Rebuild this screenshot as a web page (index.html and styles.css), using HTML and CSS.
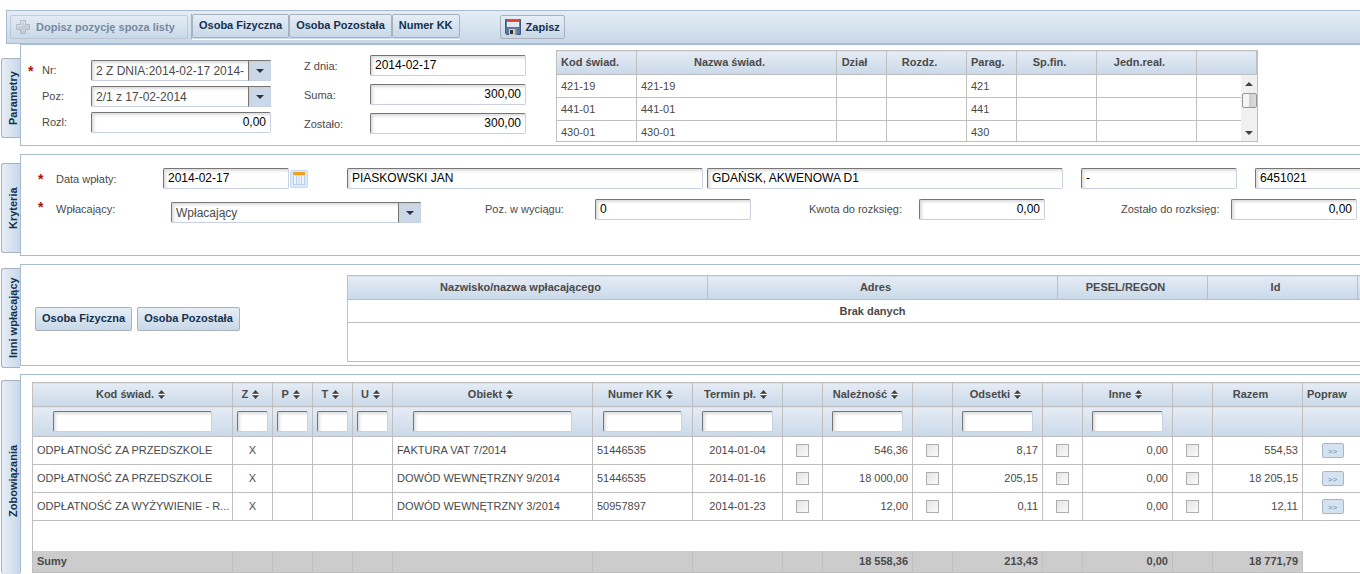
FILE: index.html
```html
<!DOCTYPE html>
<html lang="pl">
<head>
<meta charset="utf-8">
<title>Zobowiązania</title>
<link rel="stylesheet" href="styles.css">
</head>
<body>
<svg class="defs" aria-hidden="true">
  <symbol id="sort" viewBox="0 0 7 9"><path d="M3.500 0L6.500 3.500H.5zM.5 5.500h6L3.500 9z" fill="#3d3d3d"/><path d="M0 3.500h7v2H0z" fill="#3d3d3d"/><path d="M0 4.500h7" stroke="#fff"/></symbol>
</svg>
<header class="toolbar">
  <button class="btn btn-add" disabled>
    <svg width="16" height="16" viewBox="0 0 16 16"><path d="M5.500 1.500h5v4h4v5h-4v4h-5v-4h-4v-5h4z" fill="#b8bdc2" stroke="#8f959b"/><path d="M6.500 5.500v-3h3v3M2.500 9.500v-3h4" fill="none" stroke="#dfe3e6"/></svg>
    Dopisz pozycję spoza listy
  </button>
  <div class="group">
    <button class="btn">Osoba Fizyczna</button>
    <button class="btn">Osoba Pozostała</button>
    <button class="btn">Numer KK</button>
  </div>
  <button class="btn btn-save">
    <svg width="16" height="16" viewBox="0 0 16 16"><path d="M.5.5h15v15h-14l-1-1z" fill="#58789f" stroke="#3c5a85"/><path d="M2 1h12v7H2z" fill="#f4f6f8"/><path d="M2 0h12v3H2z" fill="#e8452c"/><path d="M3 5h10M3 7h10" stroke="#cdd3da"/><path d="M4 10h8v6H4z" fill="#cfd0cc"/><path d="M5 11h3v4H5z" fill="#333"/><path d="M10 10h2v6h-2z" fill="#8d9096"/></svg>
    Zapisz
  </button>
</header>
<main>
  <section class="section params">
    <h2 class="tab">Parametry</h2>
    <div class="panel">
      <div class="fields fields-a">
        <div class="row"><span class="req">*</span><label for="nr">Nr:</label><span class="combo"><select id="nr"><option>2 Z DNIA:2014-02-17 2014-</option></select><i class="arrow"></i></span></div>
        <div class="row"><span class="req"></span><label for="poz">Poz:</label><span class="combo"><select id="poz"><option>2/1 z 17-02-2014</option></select><i class="arrow"></i></span></div>
        <div class="row"><span class="req"></span><label for="rozl">Rozl:</label><input class="field num" id="rozl" value="0,00"></div>
      </div>
      <div class="fields fields-b">
        <div class="row"><label for="zdnia">Z dnia:</label><input class="field" id="zdnia" value="2014-02-17"></div>
        <div class="row"><label for="suma">Suma:</label><input class="field num" id="suma" value="300,00"></div>
        <div class="row"><label for="zost">Zostało:</label><input class="field num" id="zost" value="300,00"></div>
      </div>
      <div class="scroller">
        <table class="grid codes">
          <colgroup><col class="w80"><col class="w200"><col class="w50"><col class="w80"><col class="w50"><col class="w80"><col class="w100"><col class="w60"></colgroup>
          <thead><tr><th class="first">Kod świad.</th><th>Nazwa świad.</th><th>Dział</th><th>Rozdz.</th><th class="first">Parag.</th><th>Sp.fin.</th><th>Jedn.real.</th><th></th></tr></thead>
          <tbody>
            <tr><td>421-19</td><td>421-19</td><td></td><td></td><td>421</td><td></td><td></td><td></td></tr>
            <tr><td>441-01</td><td>441-01</td><td></td><td></td><td>441</td><td></td><td></td><td></td></tr>
            <tr><td>430-01</td><td>430-01</td><td></td><td></td><td>430</td><td></td><td></td><td></td></tr>
          </tbody>
        </table>
        <div class="scrollbar"><i class="up"></i><i class="thumb"></i><i class="down"></i></div>
      </div>
    </div>
  </section>

  <section class="section criteria">
    <h2 class="tab">Kryteria</h2>
    <div class="panel">
      <div class="row">
        <span class="req">*</span><label class="l-name" for="data">Data wpłaty:</label>
        <input class="field w-date" id="data" value="2014-02-17">
        <button class="cal" aria-label="Kalendarz"><svg width="12" height="13" viewBox="0 0 12 13"><path d="M0 0h12v13H0z" fill="#eef4fb"/><path d="M.5 3v10M3.500 3v10M6 3v10M8.500 3v10M11.500 3v10M0 12.500h12" stroke="#b9d0ec"/><path d="M0 0h12v3H0z" fill="#efa01e"/><path d="M0 3.500h12" stroke="#f8d9a0"/></svg></button>
        <input class="field w-long" aria-label="Nazwa" value="PIASKOWSKI JAN">
        <input class="field w-long" aria-label="Adres" value="GDAŃSK, AKWENOWA D1">
        <input class="field w-mid" aria-label="PESEL" value="-">
        <input class="field w-mid" aria-label="Id" value="6451021">
      </div>
      <div class="row top">
        <span class="req">*</span><label class="l-name" for="wpl">Wpłacający:</label>
        <span class="combo wide"><select id="wpl"><option>Wpłacający</option></select><i class="arrow"></i></span>
        <label class="l-pos" for="pos">Poz. w wyciągu:</label><input class="field w-mid" id="pos" value="0">
        <label class="l-sum" for="kw">Kwota do rozksięg:</label><input class="field num w-date" id="kw" value="0,00">
        <label class="l-rest" for="zr">Zostało do rozksięg:</label><input class="field num w-date" id="zr" value="0,00">
      </div>
    </div>
  </section>

  <section class="section others">
    <h2 class="tab">Inni wpłacający</h2>
    <div class="panel">
      <div class="choices"><button class="btn">Osoba Fizyczna</button><button class="btn">Osoba Pozostała</button></div>
      <div class="payers-box">
        <table class="grid payers">
          <colgroup><col class="w360"><col class="w350"><col class="w150"><col class="w150"><col class="w40"></colgroup>
          <thead><tr><th>Nazwisko/nazwa wpłacającego</th><th>Adres</th><th>PESEL/REGON</th><th>Id</th><th></th></tr></thead>
          <tbody><tr><td colspan="5">Brak danych</td></tr></tbody>
        </table>
      </div>
    </div>
  </section>

  <section class="section dues">
    <h2 class="tab">Zobowiązania</h2>
    <div class="panel">
      <table class="grid main">
        <colgroup><col class="w200"><col class="w40"><col class="w40"><col class="w40"><col class="w40"><col class="w200"><col class="w100"><col class="w90"><col class="w40"><col class="w90"><col class="w40"><col class="w90"><col class="w40"><col class="w90"><col class="w40"><col class="w90"><col class="w60"></colgroup>
        <thead>
          <tr><th>Kod świad. <svg class="sort"><use href="#sort"/></svg></th><th>Z <svg class="sort"><use href="#sort"/></svg></th><th>P <svg class="sort"><use href="#sort"/></svg></th><th>T <svg class="sort"><use href="#sort"/></svg></th><th>U <svg class="sort"><use href="#sort"/></svg></th><th>Obiekt <svg class="sort"><use href="#sort"/></svg></th><th>Numer KK <svg class="sort"><use href="#sort"/></svg></th><th>Termin pł. <svg class="sort"><use href="#sort"/></svg></th><th></th><th>Należność <svg class="sort"><use href="#sort"/></svg></th><th></th><th>Odsetki <svg class="sort"><use href="#sort"/></svg></th><th></th><th>Inne <svg class="sort"><use href="#sort"/></svg></th><th></th><th class="plain">Razem</th><th class="first">Popraw</th></tr>
          <tr class="filters"><th><input class="field f160" aria-label="Filtr kod"></th><th><input class="field f31" aria-label="Filtr Z"></th><th><input class="field f31" aria-label="Filtr P"></th><th><input class="field f31" aria-label="Filtr T"></th><th><input class="field f31" aria-label="Filtr U"></th><th><input class="field f160" aria-label="Filtr obiekt"></th><th><input class="field f80" aria-label="Filtr numer KK"></th><th><input class="field f71" aria-label="Filtr termin"></th><th></th><th><input class="field f71" aria-label="Filtr należność"></th><th></th><th><input class="field f71" aria-label="Filtr odsetki"></th><th></th><th><input class="field f71" aria-label="Filtr inne"></th><th></th><th></th><th></th></tr>
        </thead>
        <tbody>
          <tr><td>ODPŁATNOŚĆ ZA PRZEDSZKOLE</td><td class="c">X</td><td></td><td></td><td></td><td>FAKTURA VAT 7/2014</td><td>51446535</td><td class="c">2014-01-04</td><td class="c"><input type="checkbox" aria-label="Termin"></td><td class="n">546,36</td><td class="c"><input type="checkbox" aria-label="Należność"></td><td class="n">8,17</td><td class="c"><input type="checkbox" aria-label="Odsetki"></td><td class="n">0,00</td><td class="c"><input type="checkbox" aria-label="Inne"></td><td class="n">554,53</td><td class="c"><button class="go">&gt;&gt;</button></td></tr>
          <tr><td>ODPŁATNOŚĆ ZA PRZEDSZKOLE</td><td class="c">X</td><td></td><td></td><td></td><td>DOWÓD WEWNĘTRZNY 9/2014</td><td>51446535</td><td class="c">2014-01-16</td><td class="c"><input type="checkbox" aria-label="Termin"></td><td class="n">18 000,00</td><td class="c"><input type="checkbox" aria-label="Należność"></td><td class="n">205,15</td><td class="c"><input type="checkbox" aria-label="Odsetki"></td><td class="n">0,00</td><td class="c"><input type="checkbox" aria-label="Inne"></td><td class="n">18 205,15</td><td class="c"><button class="go">&gt;&gt;</button></td></tr>
          <tr><td>ODPŁATNOŚĆ ZA WYŻYWIENIE - R...</td><td class="c">X</td><td></td><td></td><td></td><td>DOWÓD WEWNĘTRZNY 3/2014</td><td>50957897</td><td class="c">2014-01-23</td><td class="c"><input type="checkbox" aria-label="Termin"></td><td class="n">12,00</td><td class="c"><input type="checkbox" aria-label="Należność"></td><td class="n">0,11</td><td class="c"><input type="checkbox" aria-label="Odsetki"></td><td class="n">0,00</td><td class="c"><input type="checkbox" aria-label="Inne"></td><td class="n">12,11</td><td class="c"><button class="go">&gt;&gt;</button></td></tr>
          <tr class="blank"><td colspan="17"></td></tr>
        </tbody>
        <tfoot>
          <tr><td>Sumy</td><td></td><td></td><td></td><td></td><td></td><td></td><td></td><td></td><td class="n">18 558,36</td><td></td><td class="n">213,43</td><td></td><td class="n">0,00</td><td></td><td class="n">18 771,79</td><td class="none"></td></tr>
        </tfoot>
      </table>
    </div>
  </section>
</main>
</body>
</html>
```
FILE: styles.css
```css
* { box-sizing: border-box; }
body {
  margin: 0;
  padding-top: 10px;
  overflow: hidden;
  background: #fff;
  color: #4a4a4a;
  font: 11px/14px "Liberation Sans", Arial, sans-serif;
}
button, input, select { font-family: inherit; margin: 0; }
.defs { display: none; }

/* Toolbar */
.toolbar {
  display: flex;
  align-items: flex-start;
  height: 34px;
  margin-left: 6px;
  padding: 3px;
  border: 1px solid #a8bccf;
  border-right: 0;
  background: linear-gradient(#e4edf6, #c8d8e8);
}
.btn {
  display: inline-flex;
  align-items: center;
  justify-content: center;
  gap: 5px;
  height: 24px;
  padding: 0 6px 2px;
  border: 1px solid #a9b1bd;
  border-radius: 2px;
  background: linear-gradient(#e6eef6, #c8d8e8);
  color: #14304f;
  font-size: 11px;
  font-weight: bold;
  white-space: nowrap;
}
.btn-add, .btn-save { margin-top: 1px; padding: 0 4px; }
.btn-add { width: 178px; justify-content: flex-start; opacity: .5; }
.group {
  display: flex;
  margin: 0 40px 0 3px;
  height: 26px;
  border-left: 1px solid #a9b1bd;
  border-bottom: 1px solid #fff;
}

/* Sections: a vertical tab with a bordered panel */
.section { display: flex; align-items: flex-start; margin-bottom: 8px; padding-left: 1px; }
.tab {
  flex: none;
  display: flex;
  align-items: center;
  justify-content: center;
  width: 19px;
  margin: 0 0 -10px;
  padding-right: 4px;
  border: 1px solid #a9b1bd;
  border-left: 0;
  border-radius: 0 3px 3px 0;
  background: linear-gradient(to left, #e6eef6, #c8d8e8);
  color: #14304f;
  font-size: 11px;
  writing-mode: vertical-rl;
  transform: rotate(180deg);
}
.panel {
  flex: 1;
  min-width: 0;
  display: flex;
  align-items: flex-start;
  min-height: 102px;
  border: 1px solid #a8bccf;
  border-right: 0;
  background: #fff;
}
.params .tab { height: 80px; margin-top: 14px; }
.criteria .tab { height: 90px; margin-top: 9px; }
.others .tab { height: 100px; margin-top: 4px; }
.dues .tab { height: 194px; margin: 6px 0 0; padding-bottom: 6px; border-top: 0; }

/* Fields */
.row { display: flex; align-items: center; }
.req { width: 18px; height: 10px; color: #b01010; font-size: 14px; font-weight: bold; line-height: 10px; }
.field, .combo select {
  height: 21px;
  padding: 0 4px 2px;
  border: 1px solid;
  border-color: #757575 #c9d0e0 #c9d0e0 #757575;
  border-radius: 2px;
  background: #fff;
  box-shadow: inset 2px 2px 3px #ddd;
  color: #000;
  font-size: 12px;
}
.num { text-align: right; }
.combo { position: relative; display: block; width: 180px; }
.combo select { appearance: none; width: 100%; padding: 0 24px 0 4px; color: #4a4a4a; }
.arrow {
  position: absolute;
  top: 0;
  right: 0;
  width: 23px;
  height: 21px;
  border: 1px solid;
  border-color: #757575 #c9d0e0 #c9d0e0 #757575;
  background: #c9d9e9;
  box-shadow: inset 2px 2px 1px #cfd2d4;
  pointer-events: none;
}
.arrow::after {
  content: "";
  position: absolute;
  top: 8px;
  left: 7px;
  border: 4px solid transparent;
  border-top: 4px solid #333;
  border-bottom: 0;
}
.fields { flex: none; display: flex; flex-direction: column; }
.fields-a { gap: 5px; padding: 15px 0 0 7px; width: 251px; }
.fields-a .req { width: 14px; }
.fields-a label { width: 49px; padding-bottom: 2px; }
.fields-a .field { width: 180px; }
.fields-b { gap: 8px; padding: 10px 0 0 32px; }
.fields-b label { width: 66px; }
.fields-b .field { width: 156px; }

/* Tables */
.grid { border-collapse: collapse; table-layout: fixed; }
.grid th, .grid td { border: 1px solid #bfbfbf; padding: 0 4px 1px; overflow: hidden; white-space: nowrap; }
.grid th { height: 24px; padding: 0 14px 2px 0; background: linear-gradient(#e5ecf5, #c9d9e9); font-weight: bold; }
.grid th.first { padding: 0 0 2px 4px; text-align: left; }
.w40 { width: 40px; }
.w50 { width: 50px; }
.w60 { width: 60px; }
.w80 { width: 80px; }
.w90 { width: 90px; }
.w100 { width: 100px; }
.w150 { width: 150px; }
.w200 { width: 200px; }
.w350 { width: 350px; }
.w360 { width: 360px; }

.scroller { flex: none; position: relative; height: 92px; margin: 5px 0 0 30px; overflow: hidden; border: solid #bfbfbf; border-width: 0 1px 1px 0; }
.codes { width: 701px; }
.codes td { height: 23px; }
.scrollbar {
  position: absolute;
  top: 25px;
  right: 0;
  bottom: 0;
  width: 16px;
  display: flex;
  flex-direction: column;
  align-items: center;
  padding: 7px 0 6px;
  background: #f0f0f0;
}
.up, .down { border: 4px solid transparent; }
.up { border-top: 0; border-bottom-color: #444; }
.down { border-bottom: 0; border-top-color: #444; margin-top: auto; }
.thumb { width: 15px; height: 15px; margin-top: 7px; border: 1px solid #979797; border-radius: 2px; background: linear-gradient(to right, #f4f4f4 45%, #cfcfcf 50%, #dcdcdc); }

/* Criteria */
.criteria .panel { flex-direction: column; gap: 10px; padding: 13px 0 0 17px; }
.criteria .row > * { flex: none; }
.criteria .top { align-items: flex-start; }
.top > label, .top > .req { margin-top: 3px; }
.l-name { width: 107px; }
.w-date { width: 126px; }
.w-mid { width: 156px; margin-right: 18px; }
.w-long { width: 356px; margin-right: 4px; }
.w-long + .w-mid { margin-left: 14px; }
.cal { display: flex; align-items: center; justify-content: center; width: 18px; height: 18px; margin: 0 39px 0 1px; padding: 0; border: 1px solid #c3daf3; border-radius: 2px; background: #dce9f8; }
.combo.wide { width: 250px; margin: 3px 0 0 8px; }
.l-pos { width: 110px; margin-left: 64px; }
.l-sum { width: 110px; margin-left: 40px; }
.l-rest { width: 110px; margin-left: 76px; }

/* Other payers */
.choices { flex: none; display: flex; gap: 5px; width: 326px; padding: 42px 0 0 14px; }
.payers-box { flex: none; width: 1051px; height: 87px; margin-top: 10px; border: 1px solid #bfbfbf; }
.payers { width: 1051px; margin: -1px; }
.payers td { height: 23px; font-weight: bold; text-align: center; }

/* Dues */
.dues { margin-bottom: 0; }
.dues .panel { padding: 7px 0 0 11px; border-bottom: 0; }
.main { flex: none; width: 1331px; }
.main th { padding: 0 4px 2px 0; }
.main th.plain { padding-right: 14px; }
.main .filters th { height: 30px; padding: 0; }
.main .filters .field { display: block; margin: 0 auto; }
.sort { width: 7px; height: 9px; margin-left: 1px; vertical-align: -1px; }
.f31 { width: 31px; }
.f71 { width: 71px; }
.f80 { width: 79px; }
.f160 { width: 159px; }
.main td { height: 28px; }
.main .c { text-align: center; }
.main .n { text-align: right; }
.main .blank td { height: 30px; border-bottom: 0; }
.main tfoot td { height: 22px; border-top: 0; background: #ccc; font-weight: bold; }
.main tfoot .none { background: #fff; }
.main input[type="checkbox"] { appearance: none; display: block; width: 13px; height: 13px; margin: 0 auto; border: 1px solid #aeaeae; background: linear-gradient(135deg, #e4e4e4, #fbfbfb); }
.go { display: block; width: 22px; height: 15px; margin: 0 auto; padding: 3px 0 0; border: 1px solid #a9b6c8; border-radius: 2px; background: #d5e2ef; color: #5d8ab8; font-size: 8px; line-height: 10px; }
```
